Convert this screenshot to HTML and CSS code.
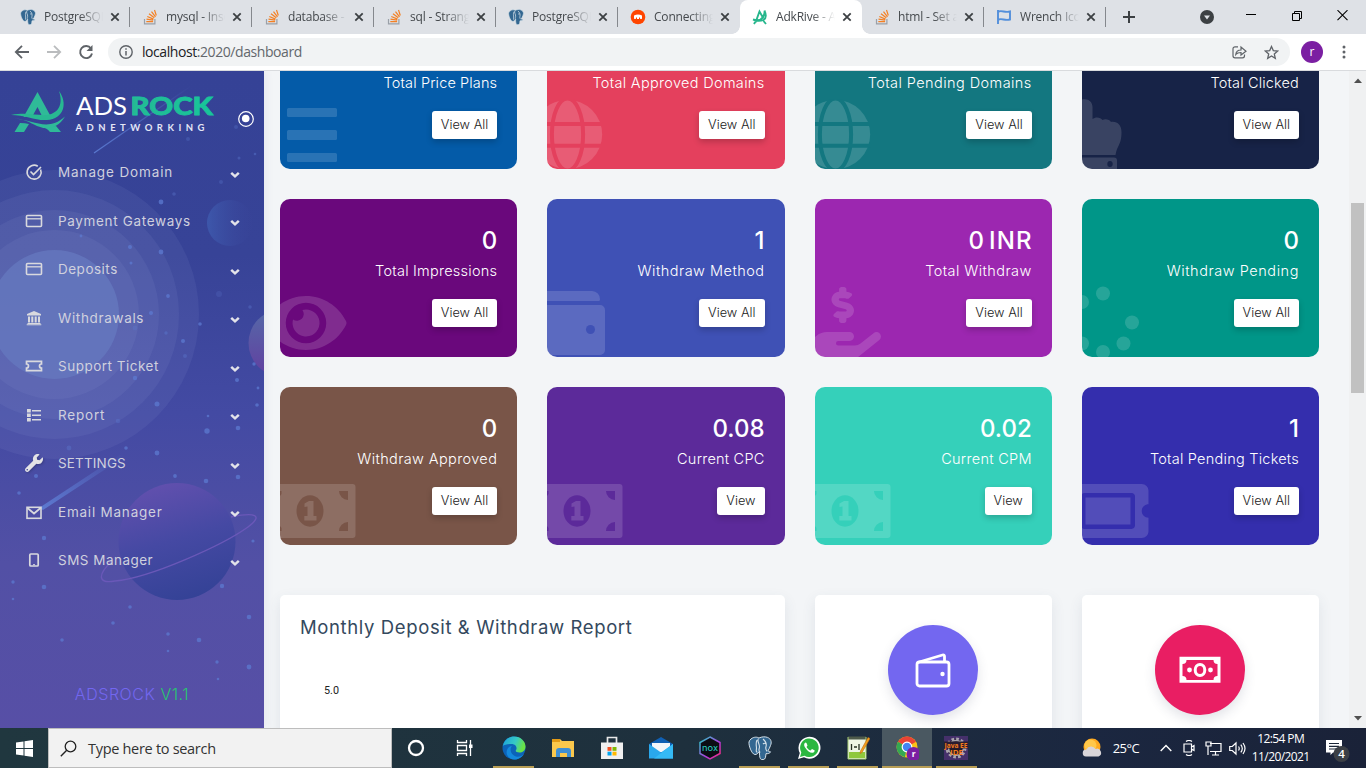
FILE: index.html
```html
<!DOCTYPE html>
<html lang="en">
<head>
<meta charset="utf-8">
<title>AdkRive - Admin Dashboard</title>
<link rel="stylesheet" href="styles.css">
</head>
<body>
<svg class="defs" width="0" height="0">
  <defs>
    <symbol id="close" viewBox="0 0 10 10"><path d="M1.300 1.300l7.400 7.400M8.700 1.300L1.300 8.700" stroke="#3c4043" stroke-width="1.800"/></symbol>
    <symbol id="stack" viewBox="0 0 16 16"><path d="M2.500 10v4.800h10.400V10" fill="none" stroke="#9aa0a8" stroke-width="1.200"/><path d="M4.300 12.600h6.800M4.500 10.200l6.700 1M5.300 7.500l6.200 2.600M7 4.800l5.300 4M9.500 2.600l4 5.300M12.500 1l1.800 5.500" stroke="#f48024" stroke-width="1.200"/></symbol>
    <symbol id="elephant" viewBox="0 0 24 24">
      <path d="M3 3C6 .5 9.500 1 11 2c3-1.400 6-1.500 8.500-.6C23 2.800 24 6 22.500 9.500c-.8 2.200-1.700 4-2.600 5.400 1 .8 2.500.2 2.700 1-.7 1.500-3 2-4.600 1.700-.4 3.500-.4 5.600-2.800 6-2.800.5-3.400-1.400-3.600-4.400l-.3-3.500c-1.300 1.600-2.700 3-4.500 2.800C3.500 18 .5 9 1 6 1.300 4.700 2 3.700 3 3z" fill="#336791" stroke="#d7e2ea" stroke-width="1"/>
      <path d="M9 4c-1.500 3-.6 6-.5 8 0 2-1 4 1 4.200M10.500 2.500C8.500 5 12 8 11.400 11.500c-.3 2-1.400 3.500.8 5M15 3c2.500 2 3.800 5.200 2.900 8-.6 2 .2 3.200 1.200 4.500M15 8c1-1 2-.8 2.900-.3" fill="none" stroke="#d7e2ea" stroke-width="1.100"/>
    </symbol>
    <symbol id="bill" viewBox="0 0 78 60">
      <path d="M0 3h72.500a3 3 0 013 3v48a3 3 0 01-3 3H0z" class="ghost"/>
      <ellipse cx="30" cy="30" rx="13.500" ry="15.700" class="cut"/>
      <path d="M59 10h9v9a9 9 0 01-9-9zM68 50h-9a9 9 0 019-9zM0 10h1.500v3L0 15zM0 50h1.500v-3L0 45z" class="cut"/>
      <path d="M24.500 22.500l4.500-2.500h4.500v15h3v4.500H24.300V35h3.200v-9.500l-3 .5z" class="ghost"/>
    </symbol>
    <symbol id="globe" viewBox="0 0 56 70">
      <circle cx="20.500" cy="35" r="34.700" class="ghost"/>
      <g class="cutline"><ellipse cx="20.500" cy="35" rx="15.600" ry="36"/><path d="M-15 24.500h72M-15 46.300h72"/></g>
    </symbol>
    <symbol id="chev" viewBox="0 0 10 8"><path d="M1.200 1.800L5 5.300l3.800-3.500" fill="none" stroke="#e3e3ea" stroke-width="2.500"/></symbol>
    <symbol id="card" viewBox="0 0 18 14"><rect x="1.500" y="1.500" width="15" height="11" rx="1" fill="none" stroke="#d9d9de" stroke-width="1.600"/><path d="M1 4.800h16" stroke="#d9d9de" stroke-width="1.300"/></symbol>
    <linearGradient id="teal" x1="0" y1="0" x2="1" y2="0"><stop stop-color="#27b894"/><stop offset="1" stop-color="#16c79a"/></linearGradient>
  </defs>
</svg>

<header class="tabs">
  <div class="tab"><svg class="fav"><use href="#elephant"/></svg><span>PostgreSQL:</span><svg class="x"><use href="#close"/></svg></div>
  <div class="tab"><svg class="fav"><use href="#stack"/></svg><span>mysql - Inse</span><svg class="x"><use href="#close"/></svg></div>
  <div class="tab"><svg class="fav"><use href="#stack"/></svg><span>database -</span><svg class="x"><use href="#close"/></svg></div>
  <div class="tab"><svg class="fav"><use href="#stack"/></svg><span>sql - Strang</span><svg class="x"><use href="#close"/></svg></div>
  <div class="tab"><svg class="fav"><use href="#elephant"/></svg><span>PostgreSQL:</span><svg class="x"><use href="#close"/></svg></div>
  <div class="tab nosep"><svg class="fav" viewBox="0 0 16 16"><circle cx="8" cy="8" r="7.300" fill="#ff4500"/><path d="M4 6.500q4-2 8 0v3q-1 1.200-2 0V8.500H9V10H7V8.500H6v1q-1 1.200-2 0z" fill="#fff"/></svg><span>Connecting</span><svg class="x"><use href="#close"/></svg></div>
  <div class="tab active nosep"><svg class="fav" viewBox="0 0 16 16"><path d="M3.500 13.500L7.500 2.500l4 7M1 10.500q7 2.500 10-2.500 2-3 1.500-6.500 3 7-1 9.500-3.500 1.500-9 .5M2 15l1.500-2.500M14 15l-2.500-3" fill="none" stroke="#26b68c" stroke-width="1.900"/></svg><span>AdkRive - A</span><svg class="x"><use href="#close"/></svg></div>
  <div class="tab"><svg class="fav"><use href="#stack"/></svg><span>html - Set a</span><svg class="x"><use href="#close"/></svg></div>
  <div class="tab"><svg class="fav" viewBox="0 0 16 16"><path d="M2 1v14M2.500 2.500c4-1.500 6 1.500 11.500 0v8c-5.500 1.500-7.500-1.500-11.500 0" fill="none" stroke="#538fdb" stroke-width="1.900"/></svg><span>Wrench Ico</span><svg class="x"><use href="#close"/></svg></div>
  <svg class="plus" viewBox="0 0 12 12"><path d="M6 0v12M0 6h12" stroke="#3c4043" stroke-width="2"/></svg>
  <div class="win">
    <svg width="14" height="14" viewBox="0 0 14 14"><circle cx="7" cy="7" r="7" fill="#3c4043"/><path d="M4 5.500h6L7 9.500z" fill="#dee1e6"/></svg>
    <svg width="10" height="14" viewBox="0 0 10 14"><path d="M0 4.500h10" stroke="#000"/></svg>
    <svg width="10" height="14" viewBox="0 0 10 14"><path d="M.5 3.500h7v7h-7zM2.500 3V1.500h7v7H8" fill="none" stroke="#000"/></svg>
    <svg width="11" height="14" viewBox="0 0 11 14"><path d="M.5 -.5l10 10M10.500 -.5l-10 10" transform="translate(0 .7)" stroke="#000" stroke-width="1.100"/></svg>
  </div>
</header>

<nav class="toolbar">
  <svg class="nav" viewBox="0 0 16 16"><path d="M15 8H2M8 1.800L1.800 8 8 14.200" fill="none" stroke="#5f6368" stroke-width="1.800"/></svg>
  <svg class="nav" viewBox="0 0 16 16"><path d="M1 8h13M8 1.800L14.200 8 8 14.200" fill="none" stroke="#babcbe" stroke-width="1.800"/></svg>
  <svg class="nav" viewBox="0 0 16 16"><path d="M13 4.500A6 6 0 1 0 14 9.500" fill="none" stroke="#5f6368" stroke-width="1.900"/><path d="M14.500 1v6H8.500z" fill="#5f6368"/></svg>
  <div class="omni">
    <svg width="14" height="14" viewBox="0 0 14 14"><circle cx="7" cy="7" r="6.200" fill="none" stroke="#5f6368" stroke-width="1.400"/><path d="M7 6v4.500M7 3.300v1.500" stroke="#5f6368" stroke-width="1.500"/></svg>
    <span class="url"><b>localhost</b>:2020/dashboard</span>
    <svg width="15" height="14" viewBox="0 0 15 14"><path d="M6 1.800H3A2 2 0 0 0 1 3.800v7a2 2 0 0 0 2 2h7.500a2 2 0 0 0 2-2V9.500M3.800 9.500c.3-3 2-4.500 5.200-4.500V2l5 4.200L9 10V7.500c-2.400 0-4 .4-5.200 2z" fill="none" stroke="#5f6368" stroke-width="1.200"/></svg>
    <svg width="15" height="15" viewBox="0 0 15 15"><path d="M7.500 1.500l1.800 4.100 4.400.4-3.400 2.900 1 4.400-3.800-2.300-3.800 2.300 1-4.400L1.300 6l4.400-.4z" fill="none" stroke="#5f6368" stroke-width="1.300"/></svg>
  </div>
  <div class="avatar">r</div>
  <svg class="kebab" viewBox="0 0 4 14"><circle cx="2" cy="2" r="1.500"/><circle cx="2" cy="7" r="1.500"/><circle cx="2" cy="12" r="1.500"/></svg>
</nav>

<main class="view">
  <aside class="side">
    <svg class="art" viewBox="0 71 264 657">
      <defs>
        <linearGradient id="p1" x1="0" y1="0" x2="1" y2="0"><stop stop-color="#4060b4" stop-opacity=".7"/><stop offset="1" stop-color="#3a4499" stop-opacity=".1"/></linearGradient>
        <linearGradient id="p2" x1="0" y1="0" x2="0" y2="1"><stop stop-color="#5569a8"/><stop offset="1" stop-color="#623fa0"/></linearGradient>
        <linearGradient id="p3" x1=".3" y1="0" x2=".6" y2="1"><stop stop-color="#6250ae"/><stop offset=".5" stop-color="#4549a3"/><stop offset="1" stop-color="#344296"/></linearGradient>
        <linearGradient id="comet" x1="0" y1="1" x2="1" y2="0"><stop stop-color="#5e7fd6" stop-opacity=".9"/><stop offset="1" stop-color="#5e7fd6" stop-opacity="0"/></linearGradient>
      </defs>
      <g fill="#a3aae0" fill-opacity=".095"><circle cx="54.500" cy="314.500" r="144.500"/><circle cx="54.500" cy="314.500" r="124.500"/><circle cx="54.500" cy="314.500" r="104.500"/><circle cx="54.500" cy="314.500" r="84.500"/></g>
      <circle cx="54.500" cy="314.500" r="64.500" fill="#667bc0" fill-opacity=".7"/>
      <circle cx="230" cy="223" r="23" fill="url(#p1)"/>
      <circle cx="282" cy="343" r="33.500" fill="url(#p2)"/>
      <circle cx="177" cy="541.500" r="58.500" fill="url(#p3)"/>
      <path d="M112 561C96 576 99 584 115 581c35-3 108-36 133-54 16-12 7-15-17-10" fill="none" stroke="#6a58b8" stroke-width="1.400"/>
      <path d="M39 508l82-54 3 3-81 53z" fill="url(#comet)"/>
      <path d="M94 153L191 86" stroke="url(#comet)" stroke-width="1.200"/>
      <g fill="#5c7ad0" fill-opacity=".75">
        <circle cx="161" cy="202" r="2.400"/><circle cx="174" cy="194" r="1.800" opacity=".5"/><circle cx="188" cy="139" r="2" opacity=".4"/><circle cx="236" cy="127" r="2" opacity=".4"/><circle cx="239" cy="158" r="1.500" opacity=".5"/><circle cx="255" cy="154" r="1.300" opacity=".6"/><circle cx="221" cy="182" r="2" opacity=".4"/><circle cx="130" cy="247" r="2"/><circle cx="161" cy="252" r="2.400"/><circle cx="131" cy="263" r="1.500"/><circle cx="81" cy="236" r="1.400"/><circle cx="111" cy="225" r="1.700"/>
        <circle cx="168" cy="296" r="1.900"/><circle cx="151" cy="313" r="2"/><circle cx="200" cy="324" r="1.800"/><circle cx="183" cy="341" r="2"/><circle cx="185" cy="356" r="2" opacity=".5"/><circle cx="166" cy="333" r="1.700" opacity=".6"/><circle cx="135" cy="328" r="2.400" opacity=".4"/><circle cx="135" cy="378" r="2.200"/><circle cx="254" cy="364" r="1.700"/><circle cx="237" cy="380" r="2"/><circle cx="258" cy="388" r="1.400"/><circle cx="257" cy="405" r="1.800"/><circle cx="157" cy="404" r="2.500"/><circle cx="208" cy="416" r="1.300"/><circle cx="207" cy="431" r="2.700"/><circle cx="238" cy="428" r="2.300"/><circle cx="126" cy="448" r="1.800"/><circle cx="157" cy="453" r="2.400"/><circle cx="175" cy="476" r="1.900"/><circle cx="206" cy="481" r="2.300"/><circle cx="238" cy="477" r="2.300"/><circle cx="118" cy="421" r="2.300" opacity=".5"/><circle cx="69" cy="448" r="2.400" opacity=".5"/><circle cx="36" cy="476" r="2"/><circle cx="19" cy="493" r="1.800"/><circle cx="250" cy="307" r="1.800" opacity=".5"/><circle cx="219" cy="294" r="3" opacity=".3"/>
        <circle cx="44" cy="538" r="2.200"/><circle cx="253" cy="541" r="1.600"/><circle cx="13" cy="582" r="1.700"/><circle cx="44" cy="587" r="2.300"/><circle cx="13" cy="599" r="1.300"/><circle cx="222" cy="586" r="2.200"/><circle cx="130" cy="607" r="1.800"/><circle cx="113" cy="623" r="1.800"/><circle cx="249" cy="617" r="2.300"/><circle cx="62" cy="640" r="1.800"/><circle cx="168" cy="634" r="1.800"/><circle cx="199" cy="640" r="2.300"/><circle cx="168" cy="651" r="1.300"/><circle cx="217" cy="662" r="1.700"/><circle cx="249" cy="667" r="2.400"/><circle cx="218" cy="679" r="1.300"/>
      </g>
    </svg>
    <div class="brand">
      <svg class="logo" viewBox="0 71 264 77">
        <path d="M23.500 117L37.500 92l13 24h-8.500l-4.500-9-5 9zM14.500 132l5.500-9q5 0 9 1l-5 8zM42 127l14-1 5 6H50q-3-4-8-5z" fill="#2fba98"/>
        <path d="M59 91c9 12 5 28-12 29-11 1-22-5-36-5 17-3 26 1 36 0 13-2 16-12 12-24z" fill="#28b892"/>
        <path d="M14 118.500c20 1 33 14 51-2-9 15-22 13-31 8-6-3-12-6-20-6z" fill="#2fba98"/>
        <text x="76" y="115" font-family="Lato, sans-serif" font-size="25.500" fill="#fff" textLength="51" lengthAdjust="spacingAndGlyphs">ADS</text>
        <text x="130.500" y="115" font-family="Lato, sans-serif" font-size="24.500" font-weight="900" fill="url(#teal)" stroke="#1ac39a" stroke-width=".8" textLength="82.500" lengthAdjust="spacingAndGlyphs">ROCK</text>
        <text x="75.500" y="131" font-family="Lato, sans-serif" font-size="9.500" font-weight="700" fill="#e4e6f5" textLength="129">ADNETWORKING</text>
        <circle cx="246" cy="119" r="7.300" fill="none" stroke="#fff" stroke-width="1.200"/><circle cx="245.700" cy="118.500" r="3.800" fill="#fff"/>
      </svg>
    </div>
    <ul class="menu">
      <li><svg class="mi" viewBox="0 0 18 18"><path d="M15.600 6.500A7 7 0 1 1 12.800 3.200" fill="none" stroke="#d9d9de" stroke-width="1.600"/><path d="M5.500 8.500L8.500 11.500 16 4" fill="none" stroke="#d9d9de" stroke-width="1.600"/></svg><span class="s1">Manage Domain</span><svg class="chev"><use href="#chev"/></svg></li>
      <li><svg class="mi"><use href="#card"/></svg><span class="s2">Payment Gateways</span><svg class="chev"><use href="#chev"/></svg></li>
      <li><svg class="mi"><use href="#card"/></svg><span class="s3">Deposits</span><svg class="chev"><use href="#chev"/></svg></li>
      <li><svg class="mi" viewBox="0 0 18 18"><path d="M9 2l7 3v1.500H2V5zM3 7.500h2v6H3zM6.300 7.500h2v6h-2zM9.700 7.500h2v6h-2zM13 7.500h2v6h-2zM2.500 14h13v1h-13zM1.700 15.200h14.600v1H1.700z" fill="#d9d9de"/></svg><span class="s4">Withdrawals</span><svg class="chev"><use href="#chev"/></svg></li>
      <li><svg class="mi" viewBox="0 0 18 18"><path d="M1.500 4.300h15V7a2 2 0 0 0 0 4v2.700h-15V11a2 2 0 0 0 0-4z" fill="none" stroke="#d9d9de" stroke-width="1.700"/></svg><span class="s5">Support Ticket</span><svg class="chev"><use href="#chev"/></svg></li>
      <li><svg class="mi" viewBox="0 0 18 18"><path d="M2 3h3.800v3.500H2zM2 7.500h3.800V11H2zM2 12h3.800v3.500H2zM7 4h9v1.600H7zM7 8.500h9v1.600H7zM7 13h9v1.600H7z" fill="#d9d9de"/></svg><span class="s6">Report</span><svg class="chev"><use href="#chev"/></svg></li>
      <li><svg class="mi wrench" viewBox="0 0 512 512"><path d="M507.730 109.100c-2.240-9.030-13.540-12.090-20.120-5.510l-74.360 74.360-67.880-11.310-11.310-67.880 74.360-74.360c6.620-6.620 3.430-17.900-5.660-20.160-47.380-11.740-99.550.91-136.580 37.930-39.640 39.640-50.550 97.100-34.050 147.200L18.740 402.760c-24.990 24.990-24.990 65.510 0 90.500 24.990 24.990 65.510 24.990 90.500 0l213.210-213.210c50.120 16.710 107.470 5.680 147.370-34.220 37.070-37.070 49.700-89.320 37.910-136.730zM64 472c-13.250 0-24-10.750-24-24 0-13.260 10.750-24 24-24s24 10.740 24 24c0 13.250-10.750 24-24 24z" fill="#e3e3e6"/></svg><span class="s7">SETTINGS</span><svg class="chev"><use href="#chev"/></svg></li>
      <li><svg class="mi" viewBox="0 0 18 18"><rect x="2" y="4.300" width="14" height="11" fill="none" stroke="#d9d9de" stroke-width="1.600"/><path d="M2.500 5L9 10.500 15.500 5" fill="none" stroke="#d9d9de" stroke-width="1.800"/></svg><span class="s8">Email Manager</span><svg class="chev"><use href="#chev"/></svg></li>
      <li><svg class="mi" viewBox="0 0 18 18"><rect x="4.800" y="3" width="8.400" height="12" rx="1" fill="none" stroke="#d9d9de" stroke-width="1.700"/><path d="M8 13.700h2" stroke="#d9d9de"/></svg><span class="s9">SMS Manager</span><svg class="chev"><use href="#chev"/></svg></li>
    </ul>
    <p class="ver">ADSROCK <em>V1.1</em></p>
  </aside>

  <section class="content">
    <div class="grid">
      <article class="stat blue"><svg class="bg" viewBox="0 0 238 158"><g class="ghost"><rect x="7" y="97" width="50" height="9" rx="1.500"/><rect x="7" y="119" width="50" height="10" rx="1.500"/><rect x="7" y="142" width="50" height="9" rx="1.500"/></g></svg><h3>&nbsp;</h3><p>Total Price Plans</p><a>View All</a></article>
      <article class="stat red"><svg class="bg" viewBox="0 0 238 158"><use href="#globe" x="0" y="88.500" width="56" height="70"/></svg><h3>&nbsp;</h3><p>Total Approved Domains</p><a>View All</a></article>
      <article class="stat dteal"><svg class="bg" viewBox="0 0 238 158"><use href="#globe" x="0" y="88.500" width="56" height="70"/></svg><h3>&nbsp;</h3><p>Total Pending Domains</p><a>View All</a></article>
      <article class="stat navy"><svg class="bg" viewBox="0 0 238 158"><path class="ghost" d="M0 88.500c6-1.500 10.500 2 10.500 7.500v12c3-2.500 8-2 10 1 3-1.500 7-.5 8.500 2 6-1 10.500 3 10.500 10 0 7-1 10-3.500 15-1.500 3-2 5-2.500 8H0zM0 146.500h32a3 3 0 0 1 3 3V158H0z"/><ellipse class="cut" cx="28" cy="153" rx="2.700" ry="3"/></svg><h3>&nbsp;</h3><p>Total Clicked</p><a>View All</a></article>

      <article class="stat purple"><svg class="bg" viewBox="0 0 238 158"><path class="ghost" transform="translate(-14.500 88) scale(.1406)" d="M572.520 241.400C518.290 135.590 410.930 64 288 64S57.680 135.640 3.480 241.410a32.350 32.350 0 0 0 0 29.190C57.710 376.410 165.070 448 288 448s230.320-71.640 284.520-177.410a32.350 32.350 0 0 0 0-29.190zM288 400a144 144 0 1 1 144-144 143.930 143.930 0 0 1-144 144zm0-240a95.310 95.310 0 0 0-25.310 3.790 47.850 47.850 0 0 1-66.900 66.900A95.780 95.780 0 1 0 288 160z"/></svg><h3>0</h3><p>Total Impressions</p><a>View All</a></article>
      <article class="stat indigo"><svg class="bg" viewBox="0 0 238 158"><path class="ghost" d="M0 92h45a8 8 0 0 1 8 8.500a1.500 1.500 0 0 1-1.500 1.500H0zM0 106h53a5 5 0 0 1 5 5v40a5 5 0 0 1-5 5H0z"/><circle class="cut" cx="43.500" cy="130.500" r="4.500"/></svg><h3>1</h3><p>Withdraw Method</p><a>View All</a></article>
      <article class="stat magenta"><svg class="bg" viewBox="0 0 238 158"><path class="ghost" transform="translate(-15 88) scale(.1406)" d="M271.060 144.300l54.270 14.300a8.590 8.590 0 0 1 6.630 8.100c0 4.600-4.090 8.400-9.120 8.400h-35.600a30 30 0 0 1-11.190-2.200c-5.240-2.200-11.280-1.700-15.300 2l-19 17.500a11.680 11.680 0 0 0-2.250 2.660 11.420 11.420 0 0 0 3.880 15.740 83.770 83.770 0 0 0 34.510 11.500V240c0 8.800 7.830 16 17.370 16h17.370c9.550 0 17.380-7.200 17.380-16v-17.600c32.930-3.600 57.840-31 53.500-63-3.150-23-22.460-41.300-46.560-47.700L282.680 97.400a8.590 8.590 0 0 1-6.630-8.100c0-4.600 4.090-8.400 9.120-8.400h35.600A30 30 0 0 1 332 83.100c5.230 2.200 11.280 1.700 15.300-2l19-17.500a11.310 11.310 0 0 0 2.170-2.600 11.430 11.430 0 0 0-3.840-15.780 83.820 83.820 0 0 0-34.520-11.500V16c0-8.800-7.820-16-17.370-16H295.370C285.820 0 278 7.200 278 16v17.600c-32.890 3.600-57.850 31-53.510 63 3.140 23 22.510 41.300 46.570 47.700zM565.270 328.100c-11.800-10.700-30.200-10-42.600 0L430.270 402a63.640 63.640 0 0 1-40 14H272a16 16 0 0 1 0-32h78.290c15.900 0 30.710-10.900 33.250-26.600a31.200 31.200 0 0 0 .46-5.460A32 32 0 0 0 352 320H192a117.660 117.660 0 0 0-74.100 26.290L71.400 384H16a16 16 0 0 0-16 16v96a16 16 0 0 0 16 16h356.770a64 64 0 0 0 40-14L564 377a32 32 0 0 0 1.280-48.900z"/></svg><h3>0 INR</h3><p>Total Withdraw</p><a>View All</a></article>
      <article class="stat green"><svg class="bg" viewBox="0 0 238 158"><g class="ghost"><circle cx="21" cy="94.500" r="7"/><circle cx="50" cy="123.500" r="7"/><circle cx="41.500" cy="144.500" r="7"/><circle cx="21" cy="153" r="7"/><circle cx="0" cy="103" r="7"/><circle cx="0" cy="144.500" r="7"/></g></svg><h3>0</h3><p>Withdraw Pending</p><a>View All</a></article>

      <article class="stat brown"><svg class="bg" viewBox="0 0 238 158"><use href="#bill" x="0" y="94" width="78" height="60"/></svg><h3>0</h3><p>Withdraw Approved</p><a>View All</a></article>
      <article class="stat violet"><svg class="bg" viewBox="0 0 238 158"><use href="#bill" x="0" y="94" width="78" height="60"/></svg><h3>0.08</h3><p>Current CPC</p><a>View</a></article>
      <article class="stat mint"><svg class="bg" viewBox="0 0 238 158"><use href="#bill" x="0" y="94" width="78" height="60"/></svg><h3>0.02</h3><p>Current CPM</p><a>View</a></article>
      <article class="stat royal"><svg class="bg" viewBox="0 0 238 158"><path class="ghost" transform="translate(-14.500 88) scale(.1406)" d="M128 160h320v192H128V160zm400 96c0 26.510 21.490 48 48 48v96c0 26.510-21.490 48-48 48H48c-26.510 0-48-21.490-48-48v-96c26.510 0 48-21.490 48-48s-21.490-48-48-48v-96c0-26.510 21.490-48 48-48h480c26.510 0 48 21.490 48 48v96c-26.510 0-48 21.490-48 48zm-48-104c0-13.255-10.745-24-24-24H120c-13.255 0-24 10.745-24 24v208c0 13.255 10.745 24 24 24h336c13.255 0 24-10.745 24-24V152z"/></svg><h3>1</h3><p>Total Pending Tickets</p><a>View All</a></article>
    </div>
    <div class="grid lower">
      <article class="panel report"><h4>Monthly Deposit &amp; Withdraw Report</h4><span class="tick">5.0</span></article>
      <article class="panel sum"><div class="disc iris"><svg width="38" height="38" viewBox="0 0 38 38" fill="none" stroke="#fff" stroke-width="2.800"><rect x="3" y="11" width="32" height="24" rx="2.500"/><path d="M3.500 11.500L28.500 4q2-.5 2 1.500v5"/><circle cx="28.500" cy="23" r="2.200" fill="#fff" stroke="none"/></svg></div></article>
      <article class="panel sum"><div class="disc pink"><svg width="42" height="28" viewBox="0 0 42 28"><path d="M.5 .8h41v26H.5z" fill="#fff"/><path d="M7.500 4h27q0 4 4 4v12q-4 0-4 4h-27q0-4-4-4V8q4 0 4-4z" fill="#e91e63"/><ellipse cx="21" cy="14" rx="4.800" ry="5.600" fill="none" stroke="#fff" stroke-width="3"/><circle cx="10.500" cy="14" r="2.400" fill="#fff"/><circle cx="31.500" cy="14" r="2.400" fill="#fff"/></svg></div></article>
    </div>
  </section>
  <div class="scroll"><svg width="8" height="5" viewBox="0 0 8 5"><path d="M0 5l4-4.500L8 5z" fill="#505050"/></svg><i></i><svg width="8" height="5" viewBox="0 0 8 5"><path d="M0 0l4 4.500L8 0z" fill="#505050"/></svg></div>
</main>

<footer class="task">
  <div class="start"><svg width="17" height="17" viewBox="0 0 17 17"><path d="M0 2.400l7.500-1V8H0zM8.500 1.200L17 0v8H8.500zM0 9h7.500v6.600l-7.500-1zM8.500 9H17v8l-8.500-1.200z" fill="#fff"/></svg></div>
  <div class="search"><svg width="17" height="17" viewBox="0 0 17 17"><circle cx="10.500" cy="6.500" r="5.300" fill="none" stroke="#222" stroke-width="1.300"/><path d="M6.700 10.300L.8 16.200" stroke="#222" stroke-width="1.400"/></svg><span>Type here to search</span></div>
  <div class="apps">
    <div><svg viewBox="0 0 24 24"><circle cx="12" cy="12" r="7" fill="none" stroke="#fff" stroke-width="2.300"/></svg></div>
    <div><svg viewBox="0 0 24 24"><path d="M4.500 4v2.500h9V4M4.500 20v-2.500h9V20M4.500 9.500h9v5h-9zM17.500 4v16" fill="none" stroke="#fff" stroke-width="1.300"/><path d="M16 8.500h3.500V12H16z" fill="#fff"/></svg></div>
    <div class="run"><svg viewBox="0 0 24 24"><defs><linearGradient id="e1" x1="0" y1="0" x2="1" y2=".3"><stop stop-color="#1ba0dc"/><stop offset=".6" stop-color="#36c9c5"/><stop offset="1" stop-color="#6ae245"/></linearGradient></defs><circle cx="12" cy="12" r="11.500" fill="#0c63b8"/><path d="M.8 10C2 4 6.500.5 12 .5c7 0 11.500 5 11.500 10 0 4-3 6-6 6-3 0-4.500-1.300-3.500-2.500 1.500-2 0-6-4.500-6C5 8 2 9 .8 10z" fill="url(#e1)"/><path d="M10 10c-3 3-1 9 4 10.500 3 .8 6-.5 8-2.500-2 3.500-6 5.500-10 5.500C6 23 3.500 18 5 14c1-2.500 3-4 5-4z" fill="#1489dc"/></svg></div>
    <div><svg viewBox="0 0 24 24"><path d="M1 3h8l2 2h12v16H1z" fill="#fbc84c"/><path d="M1 3h8v3H1z" fill="#e39b16"/><path d="M5 21v-6q0-3 3-3h9q3 0 3 3v6h-4v-4H9v4z" fill="#3f8fd4"/></svg></div>
    <div><svg viewBox="0 0 24 24"><path d="M7.500 8V1.500h9V8" fill="none" stroke="#e8e8e8" stroke-width="1.700"/><path d="M1 6.500h22V23H1z" fill="#f0f0f0"/><path d="M7.500 11h4v3.800h-4z" fill="#f25022"/><path d="M12.500 11h4v3.800h-4z" fill="#7fba00"/><path d="M7.500 15.700h4v3.800h-4z" fill="#00a4ef"/><path d="M12.500 15.700h4v3.800h-4z" fill="#ffb900"/></svg></div>
    <div><svg viewBox="0 0 24 24"><path d="M0 8L12 1l12 7v14H0z" fill="#1060b4"/><path d="M3 7h18v9H3z" fill="#f3f6fa"/><path d="M0 8l12 8.500L24 8v14.500H0z" fill="#2aa8ec"/><path d="M24 8L5 22.500h19z" fill="#35baf5"/></svg></div>
    <div><svg viewBox="0 0 24 24"><defs><linearGradient id="nx" x1="0" y1="0" x2="1" y2="1"><stop stop-color="#20d5c4"/><stop offset=".6" stop-color="#b13be0"/><stop offset="1" stop-color="#ff2a70"/></linearGradient></defs><path d="M12 1l10 5.500v11L12 23 2 17.500v-11z" fill="#0b0d14" stroke="url(#nx)" stroke-width="1.500"/><text x="4" y="14.500" font-family="Inter, sans-serif" font-size="8.500" fill="#28d5c4" textLength="16" lengthAdjust="spacingAndGlyphs">nox</text></svg></div>
    <div class="run"><svg><use href="#elephant"/></svg></div>
    <div class="run"><svg viewBox="0 0 24 24"><path d="M1 23l1.800-6A11 11 0 1 1 7 21.300z" fill="#fff"/><path d="M3 21l1.300-4.600A9.300 9.300 0 1 1 7.500 19.700z" fill="#2bb741"/><path d="M8.500 6.500c-2 1-1.500 3.500 0 5.500 2 3 4.500 5 7 4.800 1.500-.2 2.500-1.500 2-2.500l-2.500-1.200-1.500 1.500c-2-.6-3.200-2-4-3.500l1-1.500-1-2.500z" fill="#fff"/></svg></div>
    <div class="run"><svg viewBox="0 0 24 24"><path d="M2 1h18v22H2z" fill="#eef5e4"/><path d="M2 .5h18v3H2z" fill="#4e5a4a"/><path d="M3 16h16v6H3z" fill="#8fc83c"/><path d="M2 1v22h18V1" fill="none" stroke="#a9cf75"/><path d="M5.500 8v6M8 11h3M13 8v6" stroke="#273022" stroke-width="1.300"/><path d="M22 1.500l2 1-8 14-2 1 .5-2.500z" fill="#f2a01c" stroke="#bb6a10" stroke-width=".6"/></svg></div>
    <div class="run cur"><svg viewBox="0 0 24 24"><circle cx="12" cy="11" r="10.500" fill="#fbc116"/><path d="M12 11L2.900 5.700A10.500 10.500 0 0 1 21 5.700z" fill="#ea4335"/><path d="M12 11L2.900 5.700a10.500 10.500 0 0 0 7 15.500z" fill="#34a853"/><circle cx="12" cy="11" r="4.800" fill="#4285f4" stroke="#fff" stroke-width="1.200"/><circle cx="18.500" cy="18" r="7" fill="#7b1fa2"/><text x="16.700" y="21" font-family="Open Sans, sans-serif" font-weight="700" font-size="8.500" fill="#fff">r</text></svg></div>
    <div class="run"><svg viewBox="0 0 24 24"><path d="M0 0h24v24H0z" fill="#45306b"/><circle cx="12" cy="12" r="9" fill="#241a28" stroke="#a9a4ad" stroke-width="3" stroke-dasharray="2.700 2"/><circle cx="12" cy="12" r="7.500" fill="#241a28" stroke="#a9a4ad" stroke-width="1.500"/><path d="M0 5.500h24v7H0z" fill="#2b1d30"/><text x=".5" y="11.500" font-family="Open Sans, sans-serif" font-size="7" font-weight="700" fill="#f57c1c" textLength="23" lengthAdjust="spacingAndGlyphs">Java EE</text><text x="6" y="19" font-family="Open Sans, sans-serif" font-size="7.500" font-weight="700" fill="#f57c1c" textLength="13" lengthAdjust="spacingAndGlyphs">IDE</text></svg></div>
  </div>
  <div class="tray">
    <svg width="21" height="20" viewBox="0 0 21 20"><circle cx="10" cy="9" r="8.500" fill="#ffa91f"/><circle cx="8.500" cy="7.500" r="6" fill="#ffc84a"/><path d="M4 18.500a3.500 3.500 0 0 1 .5-7 5 5 0 0 1 9-.5 3.800 3.800 0 0 1 3 7.500z" fill="#d9d5d8"/></svg>
    <span class="temp">25°C</span>
    <svg width="12" height="8" viewBox="0 0 12 8"><path d="M.7 7L6 1.500 11.300 7" fill="none" stroke="#fff" stroke-width="1.400"/></svg>
    <svg width="12" height="16" viewBox="0 0 12 16"><path d="M3 1.500q3-2 6 0M3 14.500q3 2 6 0M1 4h7.500v8H1zM8.500 7L11 5.500v5L8.500 9" fill="none" stroke="#fff" stroke-width="1.200"/></svg>
    <svg width="17" height="15" viewBox="0 0 17 15"><path d="M5 2.500h11v8H5M10.500 10.500V14M7 14h7M1 1h5v4H1zM3 5v9" fill="none" stroke="#fff" stroke-width="1.200"/></svg>
    <svg width="17" height="15" viewBox="0 0 17 15"><path d="M.7 5.500h2.600L7 2v11L3.300 9.500H.7zM9.500 5.500q1.500 2 0 4M11.800 3.700q3 3.800 0 7.600M14 2q4 5.500 0 11" fill="none" stroke="#fff" stroke-width="1.200"/></svg>
    <div class="clock"><span>12:54 PM</span><span>11/20/2021</span></div>
    <svg class="notif" width="26" height="26" viewBox="0 0 26 26"><path d="M1 1h16v12.500H8L5.500 16v-2.500H1z" fill="#fff"/><path d="M4 4.500h10M4 7.300h10M4 10h7" stroke="#1c2638" stroke-width="1.200"/><circle cx="16.500" cy="15" r="8" fill="#3b3f45"/><text x="13.300" y="19.200" font-family="Open Sans, sans-serif" font-weight="600" font-size="11.500" fill="#fff">4</text></svg>
  </div>
</footer>
</body>
</html>
```
FILE: styles.css
```css
* { box-sizing: border-box; }
html, body { margin: 0; height: 768px; overflow: hidden; }
body { width: 1366px; font-family: Inter, "Open Sans", sans-serif; display: flex; flex-direction: column; background: #f3f5f7; }
.defs { position: absolute; }
h3, h4, p, ul { margin: 0; padding: 0; font-weight: 400; }
svg { flex: none; display: block; }

/* Browser chrome */
.tabs { height: 34px; flex: none; background: #dee1e6; display: flex; align-items: center; padding-left: 8px; font: 12px/34px "Open Sans", sans-serif; color: #45494d; }
.tab { width: 122px; height: 34px; display: flex; align-items: center; padding-left: 12px; position: relative; }
.tab::after { content: ""; width: 1px; height: 20px; background: #85888d; margin-left: 9px; }
.tab.nosep::after { visibility: hidden; }
.tab.active { background: #fff; border-radius: 8px 8px 0 0; }
.tab.active::before { content: ""; position: absolute; left: -8px; right: -8px; bottom: 0; height: 8px; background: radial-gradient(circle at 0 0, transparent 7.5px, #fff 8px) left / 8px 8px no-repeat, radial-gradient(circle at 100% 0, transparent 7.5px, #fff 8px) right / 8px 8px no-repeat; }
.fav { width: 16px; height: 16px; }
.tab span { width: 59px; margin-left: 8px; overflow: hidden; white-space: nowrap; letter-spacing: -.2px; -webkit-mask-image: linear-gradient(90deg, #000 60%, transparent); mask-image: linear-gradient(90deg, #000 60%, transparent); }
.x { width: 10px; height: 10px; margin-left: 7px; }
.plus { width: 12px; height: 12px; margin-left: 17px; }
.win { margin-left: auto; display: flex; align-items: center; padding-right: 18px; }
.win svg + svg { margin-left: 32px; }
.win svg:nth-child(3) { margin-left: 36px; }
.win svg:nth-child(4) { margin-left: 35px; }
.toolbar { height: 37px; flex: none; background: #fff; display: flex; align-items: center; padding-left: 14px; border-bottom: 1px solid #d9dbde; }
.nav { width: 16px; height: 16px; margin-right: 16px; }
.omni { width: 1182px; height: 28px; margin-left: -2px; background: #f1f3f4; border-radius: 14px; display: flex; align-items: center; padding: 0 11px; }
.url { flex: 1; margin-left: 9px; font: 14px/28px "Open Sans", sans-serif; letter-spacing: -.43px; color: #63676c; }
.url b { color: #202124; font-weight: 400; }
.omni svg:last-child { margin-left: 17px; }
.avatar { width: 22px; height: 22px; margin-left: 11px; border-radius: 50%; background: #7b1fa2; color: #fff; text-align: center; font: 12px/21px "Open Sans", sans-serif; }
.kebab { width: 4px; height: 14px; margin-left: 19px; fill: #5f6368; }

.view { height: 657px; flex: none; display: flex; overflow: hidden; }

/* Sidebar */
.side { width: 264px; flex: none; position: relative; display: flex; flex-direction: column; background: linear-gradient(#354296 0%, #374397 28%, #434aa3 52%, #5250a5 75%, #574fa6 100%); box-shadow: 2px 0 8px rgba(60, 70, 140, .07); }
.art { position: absolute; inset: 0; width: 264px; height: 657px; }
.brand, .menu, .ver { position: relative; }
.logo { width: 264px; height: 77px; }
.menu { list-style: none; flex: 1; }
.menu li { height: 48.5px; display: flex; align-items: center; padding: 0 24px 0 25px; color: #cfd0de; font-size: 13.5px; }
.mi { width: 18px; height: 18px; margin-right: 15px; }
.wrench { filter: drop-shadow(1px 1px 1px rgba(0, 0, 0, .2)); }
.chev { width: 10px; height: 8px; margin: 5px 0 0 auto; }
.s1 { letter-spacing: .88px; }
.s2 { letter-spacing: .66px; }
.s3 { letter-spacing: .5px; }
.s4 { letter-spacing: .65px; }
.s5 { letter-spacing: .5px; }
.s6 { letter-spacing: .8px; }
.s7 { letter-spacing: .15px; }
.s8 { letter-spacing: .78px; }
.s9 { letter-spacing: .48px; }
.ver { text-align: center; font-size: 16px; line-height: 20px; color: #7367f0; margin-bottom: 24px; letter-spacing: .55px; font-weight: 300; }
.ver em { font-style: normal; color: #28c76f; }

/* Dashboard */
.content { width: 1085px; padding: 0 30px 0 16px; margin-top: -60px; }
.grid { display: grid; grid-template-columns: repeat(4, 1fr); grid-auto-rows: 158px; gap: 30px; }
.stat { background: var(--c); border-radius: 10px; position: relative; overflow: hidden; color: #fff; padding: 26px 20px 0; display: flex; flex-direction: column; align-items: flex-end; }
.bg { position: absolute; left: 0; top: 0; width: 238px; height: 158px; }
.ghost { fill: #fff; fill-opacity: .15; }
.cut { fill: var(--c); }
.cutline { fill: none; stroke: var(--c); stroke-width: 4px; }
.stat h3 { font-size: 24px; font-weight: 500; line-height: 32px; }
.stat p { font-size: 14.5px; font-weight: 300; line-height: 22px; margin-top: 3px; }
.stat a { position: relative; margin-top: 17px; height: 28px; padding: 0 9px; border-radius: 3px; background: #fff; color: #222; font-size: 12.8px; font-weight: 300; line-height: 27px; box-shadow: 0 3px 6px rgba(0, 0, 0, .2); }
.blue { --c: #045ba8; } .red { --c: #e4405d; } .dteal { --c: #137780; } .navy { --c: #172347; }
.purple { --c: #6a087c; } .indigo { --c: #3f51b5; } .magenta { --c: #9c27b0; } .green { --c: #009688; }
.brown { --c: #795548; } .violet { --c: #5c2a9a; } .mint { --c: #35d0ba; } .royal { --c: #342ead; }
.blue p { letter-spacing: .13px; } .red p { letter-spacing: .32px; } .dteal p { letter-spacing: .43px; } .navy p { letter-spacing: .16px; }
.purple p { letter-spacing: .24px; } .indigo p { letter-spacing: .48px; } .magenta p { letter-spacing: .43px; } .green p { letter-spacing: .56px; }
.brown p { letter-spacing: .38px; } .violet p { letter-spacing: .22px; } .mint p { letter-spacing: .28px; } .royal p { letter-spacing: .24px; }
.magenta h3 { letter-spacing: 1.2px; word-spacing: -4px; margin-right: -1px; }
.lower { margin-top: 50px; grid-auto-rows: 240px; }
.panel { background: #fff; border-radius: 5px; box-shadow: 0 5px 14px rgba(60, 80, 110, .1); }
.report { grid-column: span 2; padding: 20px 20px; }
.report h4 { font-size: 18.5px; line-height: 24px; letter-spacing: .62px; color: #34495e; }
.tick { display: block; margin: 45px 0 0 24px; font: 10.8px/14px Roboto, sans-serif; color: #222; }
.sum { display: flex; justify-content: center; padding-top: 30px; }
.disc { width: 90px; height: 90px; border-radius: 50%; display: flex; align-items: center; justify-content: center; box-shadow: 0 5px 12px rgba(60, 70, 100, .15); }
.iris { background: #7367f0; }
.pink { background: #e91e63; }
.scroll { width: 17px; margin-left: auto; background: #f0f1f2; display: flex; flex-direction: column; align-items: center; padding: 7px 0; }
.scroll i { width: 13px; height: 190px; margin: 120px 0 auto; background: #c1c1c1; }

/* Taskbar */
.task { height: 40px; flex: none; display: flex; background: linear-gradient(90deg, #20373f, #1e303d 50%, #1b2740 80%, #1a2238); color: #fff; font-family: "Open Sans", sans-serif; }
.start { width: 48px; display: flex; align-items: center; justify-content: center; }
.search { width: 344px; background: #f2f2f2; border: 1px solid #bdbdbd; display: flex; align-items: center; padding-left: 11px; color: #333; font-size: 14.5px; letter-spacing: -.3px; }
.search span { margin-left: 11px; }
.apps { display: flex; margin-left: -1px; }
.apps div { width: 49.15px; height: 40px; display: flex; align-items: center; justify-content: center; position: relative; }
.apps svg { width: 24px; height: 24px; }
.run::after { content: ""; position: absolute; left: 4px; right: 4px; bottom: 0; height: 2px; background: #b89e55; }
.cur { background: #4a5861; }
.cur::after { left: 0; right: 0; }
.tray { flex: 1; display: flex; align-items: center; padding-left: 101px; }
.temp { width: 36px; margin: 0 11px 0 10px; font-size: 13px; letter-spacing: -.5px; }
.tray svg + svg { margin-left: 11px; }
.tray svg:nth-of-type(4) { margin-left: 10px; }
.tray svg:nth-of-type(5) { margin-left: 7px; }
.clock { width: 60px; margin-left: 5px; display: flex; flex-direction: column; align-items: center; font-size: 12px; line-height: 18px; letter-spacing: -.6px; white-space: nowrap; }
.tray .notif { margin: 8px 0 0 14px; }
```
